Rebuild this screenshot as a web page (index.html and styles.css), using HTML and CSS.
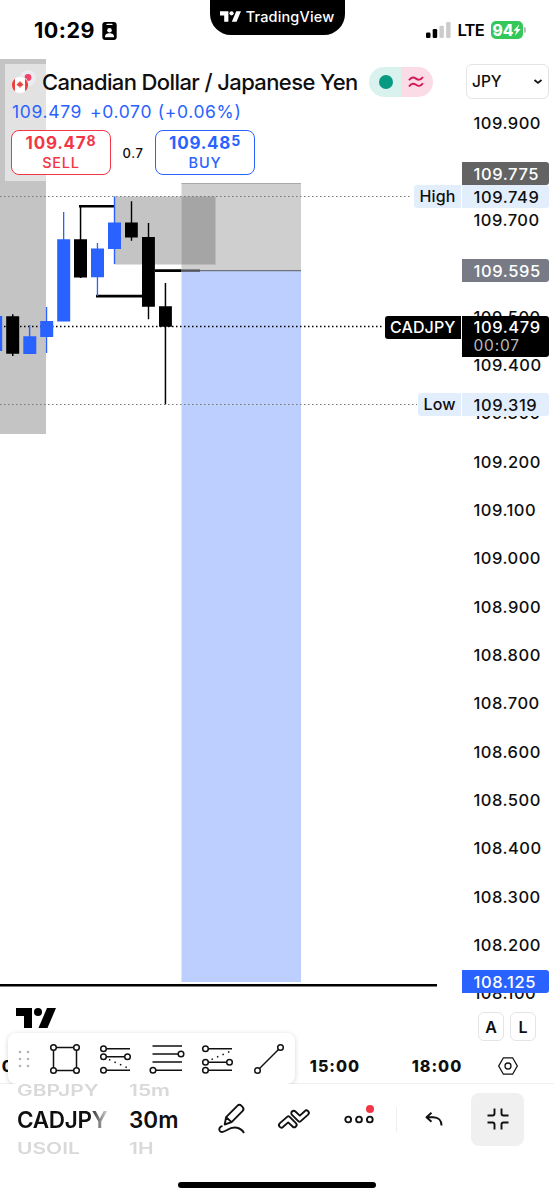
FILE: index.html
```html
<!DOCTYPE html>
<html lang="en">
<head>
<meta charset="utf-8">
<title>CADJPY</title>
<link rel="stylesheet" href="styles.css">
</head>
<body>
<div class="screen">
  <header class="status">
    <div class="clock"><span class="clock-time">10:29</span>
      <svg class="id-badge" viewBox="0 0 15 18"><rect x=".3" y="0" width="14.4" height="18" rx="3"/><path d="M5 2.4h5" stroke="#fff" stroke-width="1.2" stroke-linecap="round"/><circle cx="7.5" cy="8.3" r="2.3" fill="#fff"/><path d="M3 15.2c0-3 2-3.9 4.5-3.9s4.5.9 4.5 3.9z" fill="#fff"/></svg>
    </div>
    <div class="notch">
      <svg class="notch-logo" viewBox="0 0 40 20"><path d="M0 0h16v20H8V8H0z"/><circle cx="22" cy="4" r="4"/><path d="M31 0h9l-8.5 20h-9z"/></svg>
      <span>TradingView</span>
    </div>
    <div class="signals">
      <svg class="bars" viewBox="0 0 25 16"><rect x="0" y="10.5" width="4.5" height="5.5" rx="1.3"/><rect x="6.7" y="7" width="4.5" height="9" rx="1.3"/><rect x="13.4" y="3.7" width="4.5" height="12.3" rx="1.3" fill="#ccc"/><rect x="20.1" y="0" width="4.5" height="16" rx="1.3" fill="#ccc"/></svg>
      <span class="lte">LTE</span>
      <div class="battery"><span>94</span><svg viewBox="0 0 8 12"><path d="M6.4.3.4 6.8h3.1L1.9 11.7 7.7 5H4.6z" fill="#fff"/></svg></div><i class="battery-tip"></i>
    </div>
  </header>

  <main class="chart">
    <section class="pane">
      <svg class="canvas" viewBox="0 59 461 987">
        <rect x="0" y="59" width="46" height="375" fill="#c4c4c4"/>
        <rect x="114.5" y="196.5" width="101" height="68" fill="#c4c4c4"/>
        <g stroke="#000" stroke-width="2.6">
          <path d="M79 206.3h35.5M96 296.1h47M155 270.6h45M0 985.2h437"/>
        </g>
        <rect x="181.5" y="183" width="119.5" height="87.5" fill="#cfcfcf"/>
        <rect x="181.5" y="196.5" width="34" height="68" fill="#a5a5a5"/>
        <path d="M181.5 183.5H301" stroke="#aaa"/>
        <rect x="181.5" y="270.5" width="119.5" height="711.5" fill="#bccfff"/>
        <path d="M181.5 270.6H301" stroke="#707379" stroke-width="1.2"/>
        <path d="M181.5 270.6H200" stroke="#53565e" stroke-width="2.4"/>
        <g stroke-dasharray="1.5 2.5" stroke-width="1.2">
          <path d="M0 196.5H412M0 404.5H417" stroke="#777"/>
          <path d="M0 326.6H384" stroke="#000" stroke-width="1.5"/>
        </g>
        <g fill="#2962ff">
          <path d="M0 316h2.2v35H0zM23.3 336.3h13V354h-13zM28.9 325h1.4v12h-1.4zM40.2 321h13v16h-13zM45.9 307h1.3v46h-1.3zM57.2 239.2h13v82.3h-13zM63 212h1.3v28H63zM91 248.6h13v28.7H91zM96.8 243h1.3v53h-1.3zM108 222.6h13V249h-13zM113.8 196.5h1.4V264h-1.4z"/>
        </g>
        <g fill="#000">
          <path d="M6.2 316.2h13v37.6h-13zM12 314.3h1.5V356H12zM74 239.2h13v38.3H74zM79.8 205h1.5v73h-1.5zM125 222.6h12.8v15H125zM130.8 201.3h1.4v39.4h-1.4zM142 237h12.9v69.7H142zM147.8 223h1.4v96.3h-1.4zM159 306.3h12.9v20.4H159zM164.7 283h1.5v121.2h-1.5z"/>
        </g>
      </svg>
      <div class="legend">
        <div class="symbol">
          <svg class="flags" viewBox="0 0 26 24"><circle cx="17" cy="8" r="8" fill="#ececf0"/><circle cx="17" cy="7.5" r="3.4" fill="#f2416b"/><circle cx="9" cy="15" r="9" fill="#e6e6e6"/><circle cx="9" cy="15" r="8" fill="#fff"/><path d="M4 8.7a8 8 0 0 0 0 12.6zM14 8.7a8 8 0 0 1 0 12.6z" fill="#e8433f"/><path d="m9 10.8 1 2 1.5-.4-.3 1.5 1.5.5-2.3 2H9.4v1.5h-.8v-1.5h-1l-2.3-2 1.5-.5-.3-1.5 1.5.4z" fill="#e8433f"/></svg>
          <h1>Canadian Dollar / Japanese Yen</h1>
          <div class="pill"><span class="pill-open"><i></i></span><span class="pill-approx"><svg viewBox="0 0 16 12"><path d="M1 4.3C3.500.5 6 1.200 8 2.600S12.500 4.600 15 1M1 10.500c2.500-3.800 5-3.100 7-1.700s4.500 2 7-1.600" fill="none" stroke="#d01c5b" stroke-width="1.900"/></svg></span></div>
        </div>
        <div class="change"><span>109.479</span><span>+0.070 (+0.06%)</span></div>
        <div class="trade">
          <div class="order sell"><b>109.47<sup>8</sup></b><span>SELL</span></div>
          <span class="spread">0.7</span>
          <div class="order buy"><b>109.48<sup>5</sup></b><span>BUY</span></div>
        </div>
      </div>
      <svg class="watermark" viewBox="0 0 40 20"><path d="M0 0h16v20H8V8H0z"/><circle cx="22" cy="4" r="4"/><path d="M31 0h9l-8.500 20h-9z"/></svg>
    </section>

    <aside class="scale">
      <div class="currency"><span>JPY</span><svg viewBox="0 0 10 6"><path d="m1.500 1 3.500 3 3.500-3" fill="none" stroke="#111" stroke-width="1.700"/></svg></div>
      <div class="ticks">
        <span>109.900</span><span></span><span>109.700</span><span></span><span>109.500</span><span>109.400</span><span>109.300</span><span>109.200</span><span>109.100</span><span>109.000</span><span>108.900</span><span>108.800</span><span>108.700</span><span>108.600</span><span>108.500</span><span>108.400</span><span>108.300</span><span>108.200</span><span>108.100</span>
      </div>
      <div class="modes"><span>A</span><span>L</span></div>
      <div class="tag stop">109.775</div>
      <div class="tag high"><em>High</em>109.749</div>
      <div class="tag entry">109.595</div>
      <div class="tag last"><em>CADJPY</em>109.479<small>00:07</small></div>
      <div class="tag low"><em>Low</em>109.319</div>
      <div class="tag target">108.125</div>
    </aside>
  </main>

  <section class="axis">
    <div class="times"><span>06:00</span><span></span><span></span><span>15:00</span><span>18:00</span></div>
    <svg class="settings" viewBox="0 0 20 18" fill="none" stroke="#111" stroke-width="1.300"><path d="M5.400.8h9.200L19.300 9l-4.700 8.200H5.400L.7 9z"/><circle cx="10" cy="9" r="3"/></svg>
    <div class="tools">
      <svg class="grip" viewBox="0 0 12 18" fill="#b5b5b5"><circle cx="2" cy="2" r="1.300"/><circle cx="10" cy="2" r="1.300"/><circle cx="2" cy="9" r="1.300"/><circle cx="10" cy="9" r="1.300"/><circle cx="2" cy="16" r="1.300"/><circle cx="10" cy="16" r="1.300"/></svg>
      <svg class="tool" viewBox="0 0 32 32"><path d="M4.500 4.500h23v23h-23z"/><circle cx="4.500" cy="4.500" r="2.800"/><circle cx="27.500" cy="4.500" r="2.800"/><circle cx="4.500" cy="27.500" r="2.800"/><circle cx="27.500" cy="27.500" r="2.800"/></svg>
      <svg class="tool" viewBox="0 0 32 32"><path d="M3 5.700h27M3 13.700h24M3 27.300h27"/><path class="dots" d="M9 16.500 29 25.500"/><circle cx="3.500" cy="5.700" r="2.800"/><circle cx="3.500" cy="13.700" r="2.800"/><circle cx="27.500" cy="13.700" r="2.800"/><circle cx="3.500" cy="27.300" r="2.800"/></svg>
      <svg class="tool" viewBox="0 0 32 32"><path d="M1.500 3h29.500M1.500 11h29M1.500 19h29.500M1.500 27.300h29.500"/><circle cx="30" cy="11" r="2.800"/><circle cx="2" cy="27.300" r="2.800"/></svg>
      <svg class="tool" viewBox="0 0 32 32"><path d="M3 5.700h27M3 19.200h24M3 27.300h27"/><path class="dots" d="M9.500 16.500 29 8"/><circle cx="3.500" cy="5.700" r="2.800"/><circle cx="3.500" cy="19.200" r="2.800"/><circle cx="27.500" cy="19.200" r="2.800"/><circle cx="3.500" cy="27.300" r="2.800"/></svg>
      <svg class="tool" viewBox="0 0 32 32"><path d="m4.500 27.500 23-23"/><circle cx="4.500" cy="27.500" r="2.800"/><circle cx="27.500" cy="4.500" r="2.800"/></svg>
    </div>
  </section>

  <footer class="bottom">
    <div class="actions">
      <div class="wheel wheel-symbol"><span class="side">GBPJPY</span><strong class="fade">CADJPY</strong><span class="side">USOIL</span></div>
      <div class="wheel wheel-interval"><span class="side">15m</span><strong>30m</strong><span class="side">1H</span></div>
      <svg class="draw" viewBox="0 0 28 30"><path d="m6.700 20.500 1.400-7.400L19.300 1.900a3 3 0 0 1 4.200 0l1 1a3 3 0 0 1 0 4.200L13.600 18.200zM8.200 13.300l5.400 4.800M4.500 21.800C1.500 22.700.7 25 1.600 26.600c1.400 2.600 4.600 1 7.400-.6 7-4.500 14-2.500 17 3"/></svg>
      <svg class="indicator" viewBox="0 0 32 20"><path d="M1.700 14.400 9.400 7.600a1.500 1.500 0 0 1 2 0l6.500 6.500a2.400 2.400 0 0 1-3.400 3.400l-4.300-4.100-5 4.400a2.400 2.400 0 0 1-3.500-3.400zM14 5.900a2.400 2.400 0 0 1 3.400-3.400l4.400 4.100 4.900-4.400a2.400 2.400 0 0 1 3.400 3.400l-7.600 6.800a1.500 1.500 0 0 1-2 0z"/></svg>
      <div class="more"><svg viewBox="0 0 30 9"><circle cx="4.200" cy="4.500" r="2.900"/><circle cx="15" cy="4.500" r="2.900"/><circle cx="25.800" cy="4.500" r="2.900"/></svg><i></i></div>
      <i class="divider"></i>
      <svg class="undo" viewBox="0 0 18 14"><path d="m6.500.8-5 4.500 5 4.500M1.800 5.300h6.500c5 0 8.200 3.200 8.200 8.200"/></svg>
      <div class="shrink"><svg viewBox="0 0 22 22"><path d="M.5 7.500h5a2 2 0 0 0 2-2v-5M14.500.5v5a2 2 0 0 0 2 2h5M.5 14.500h5a2 2 0 0 1 2 2v5M14.500 21.500v-5a2 2 0 0 1 2-2h5"/></svg></div>
    </div>
    <div class="home"></div>
  </footer>
</div>
</body>
</html>
```
FILE: styles.css
```css
* { box-sizing: border-box; }
body { margin: 0; background: #fff; color: #0f0f0f; font-family: Inter, "Liberation Sans", sans-serif; }
svg { display: block; flex: none; overflow: visible; }
.screen { width: 554px; height: 1199px; display: flex; flex-direction: column; overflow: hidden; }

.status { height: 59px; display: flex; align-items: flex-start; justify-content: space-between; color: #000; }
.clock { width: 175px; padding: 18px 0 0 34px; display: flex; align-items: center; gap: 7px; }
.clock-time { font-size: 21.5px; line-height: 25px; font-weight: 700; letter-spacing: .5px; }
.id-badge { width: 15px; height: 18px; }
.notch { width: 135px; height: 35px; border-radius: 0 0 21px 21px; background: #000; color: #fff; display: flex; align-items: center; justify-content: center; gap: 5px; padding-bottom: 2px; font-size: 14.5px; font-weight: 500; letter-spacing: .15px; }
.notch-logo { width: 21px; height: 11px; fill: #fff; }
.signals { width: 175px; padding: 21px 28px 0 0; display: flex; justify-content: flex-end; align-items: center; height: 39px; }
.bars { width: 25px; height: 16px; margin-right: 6px; }
.lte { font-size: 16.5px; font-weight: 600; margin-right: 7px; letter-spacing: -.7px; }
.battery { width: 32px; height: 18px; border-radius: 5px; background: #34c759; color: #fff; display: flex; align-items: center; justify-content: center; font-size: 15.5px; font-weight: 800; }
.battery svg { width: 8px; height: 12px; }
.battery-tip { width: 2px; height: 6px; margin-left: 1px; background: #bbb; border-radius: 0 2px 2px 0; }

.chart { height: 987px; display: flex; }
.pane { width: 461px; position: relative; display: flex; flex-direction: column; justify-content: space-between; align-items: flex-start; padding: 5px 0 18.5px 5px; }
.canvas { position: absolute; left: 0; top: 0; width: 461px; height: 987px; }
.legend { position: relative; height: 117px; width: 440px; padding: 2px 0 0 6px; background: rgba(255,255,255,.5); }
.symbol { display: flex; align-items: center; height: 31px; }
.flags { width: 26px; height: 24px; margin-right: 5px; }
.symbol h1 { margin: 0; font-size: 22px; line-height: 30px; font-weight: 500; letter-spacing: -.61px; white-space: nowrap; width: 327px; }
.pill { display: flex; width: 64px; height: 30px; border-radius: 15px; overflow: hidden; }
.pill span { width: 32px; display: flex; align-items: center; justify-content: center; }
.pill-open { background: #d9f2ed; }
.pill-open i { width: 14px; height: 14px; margin-left: 2px; border-radius: 50%; background: #089981; }
.pill-approx { background: #fadbe6; }
.pill-approx svg { width: 16px; height: 12px; margin-right: 3px; }
.change { display: flex; gap: 8px; padding-left: 1px; font-size: 17.5px; line-height: 30px; letter-spacing: .65px; color: #2962ff; white-space: nowrap; }
.trade { display: flex; align-items: center; padding-top: 3px; }
.order { width: 100px; height: 45px; border: 1.5px solid; border-radius: 8px; background: #fff; display: flex; flex-direction: column; align-items: center; padding-top: 1px; }
.order b { font-size: 17px; line-height: 22px; font-weight: 700; letter-spacing: .75px; }
.order sup { font-size: 14px; line-height: 0; vertical-align: 3px; font-weight: 700; }
.order span { font-size: 14.5px; line-height: 17px; font-weight: 500; letter-spacing: .8px; }
.sell { color: #f23645; }
.buy { color: #2962ff; }
.spread { width: 44px; text-align: center; font-size: 13px; font-weight: 500; letter-spacing: .6px; }
.watermark { position: relative; margin: 0 0 0 11px; width: 40px; height: 20px; }

.scale { width: 93px; position: relative; display: flex; flex-direction: column; align-items: flex-start; padding: 5px 0 0 5px; }
.currency { width: 83px; height: 35px; border: 1px solid #e4e4e6; border-radius: 6px; padding: 0 5px; display: flex; align-items: center; justify-content: space-between; font-size: 15.5px; font-weight: 500; }
.currency svg { width: 10px; height: 6px; }
.ticks { display: flex; flex-direction: column; padding: .3px 0 0 7.5px; font-size: 16.5px; font-weight: 500; letter-spacing: .5px; }
.ticks span { height: 48.34px; line-height: 48.34px; }
.modes { display: flex; gap: 6px; margin: -5.5px 0 0 12px; }
.modes span { width: 26px; height: 29px; border: 1px solid #e4e4e6; border-radius: 6px; text-align: center; line-height: 28px; font-size: 16px; font-weight: 600; }
.tag { position: absolute; left: 1px; width: 86.5px; height: 23px; padding-left: 11.5px; border-radius: 0 3px 3px 0; font-size: 16.5px; line-height: 24px; font-weight: 500; letter-spacing: .6px; color: #fff; white-space: nowrap; }
.tag em { position: absolute; right: 87.5px; top: 0; height: 23px; padding: 0 5.5px; border-radius: 3px 0 0 3px; background: inherit; font-style: normal; font-size: 16px; line-height: 23px; letter-spacing: .1px; }
.tag small { display: block; font-size: 15.5px; line-height: 13px; font-weight: 400; color: #bbb; letter-spacing: .8px; }
.stop { top: 103px; background: #636363; }
.high { top: 126px; background: #e3eefd; color: #0f0f0f; }
.entry { top: 200px; background: #787b86; }
.last { top: 257px; height: 41px; line-height: 23px; background: #000; }
.low { top: 334px; background: #e3eefd; color: #0f0f0f; }
.target { top: 911px; background: #2962ff; }

.axis { position: relative; height: 38px; display: flex; align-items: center; border-bottom: 1px solid #f0f0f2; }
.times { width: 498px; display: flex; margin-left: -22px; padding-top: 2px; font-size: 16px; line-height: 20px; font-weight: 800; letter-spacing: 1px; }
.times span { width: 102px; flex: none; text-align: center; }
.settings { width: 20px; height: 18px; margin: 2px 0 0 22px; }
.tools { position: absolute; left: 8px; top: -13px; width: 287px; height: 51px; border-radius: 8px; background: #fff; box-shadow: 0 1px 5px rgba(0,0,0,.17); display: flex; align-items: center; padding-left: 10px; gap: 19px; }
.grip { width: 12px; height: 18px; }
.tool { width: 32px; height: 32px; fill: none; stroke: #111; stroke-width: 1.5; }
.tool circle { fill: #fff; }
.tool .dots { stroke-dasharray: 1.5 4.5; }

.bottom { height: 115px; position: relative; background: #fff; display: flex; flex-direction: column; align-items: center; }
.actions { width: 554px; height: 70px; display: flex; align-items: center; padding-left: 17px; overflow: hidden; flex: none; }
.wheel { display: flex; flex-direction: column; align-items: flex-start; height: 84px; padding-top: 2px; justify-content: center; }
.wheel strong { font-size: 22.5px; line-height: 30px; font-weight: 600; }
.side { font-size: 21px; line-height: 28px; font-weight: 600; color: #d9d9d9; transform: scaleY(.74); }
.wheel-symbol { width: 112px; }
.wheel-symbol strong { letter-spacing: -.3px; }
.wheel-interval { width: 89px; }
.fade { background: linear-gradient(90deg, #0f0f0f 72px, #e8e8e8 92px); -webkit-background-clip: text; background-clip: text; color: transparent; }
.draw, .indicator, .undo, .more svg, .shrink svg { fill: none; stroke: #111; stroke-width: 1.9; stroke-linejoin: round; }
.draw { width: 28px; height: 30px; }
.indicator { width: 32px; height: 20px; margin-left: 32px; }
.more { position: relative; width: 30px; margin-left: 33.5px; }
.more svg { width: 30px; height: 9px; }
.more i { position: absolute; right: 0; top: -10px; width: 8px; height: 8px; border-radius: 50%; background: #f23645; }
.divider { width: 1px; height: 25px; margin-left: 22px; background: #eee; }
.undo { width: 18px; height: 14px; margin-left: 28px; }
.shrink { width: 53px; height: 53px; margin-left: 28.5px; border-radius: 8px; background: #f0f0f0; display: flex; align-items: center; justify-content: center; }
.shrink svg { width: 22px; height: 22px; stroke-linejoin: miter; }
.home { width: 198px; height: 6px; margin-top: 28px; border-radius: 3px; background: #000; flex: none; }
```
